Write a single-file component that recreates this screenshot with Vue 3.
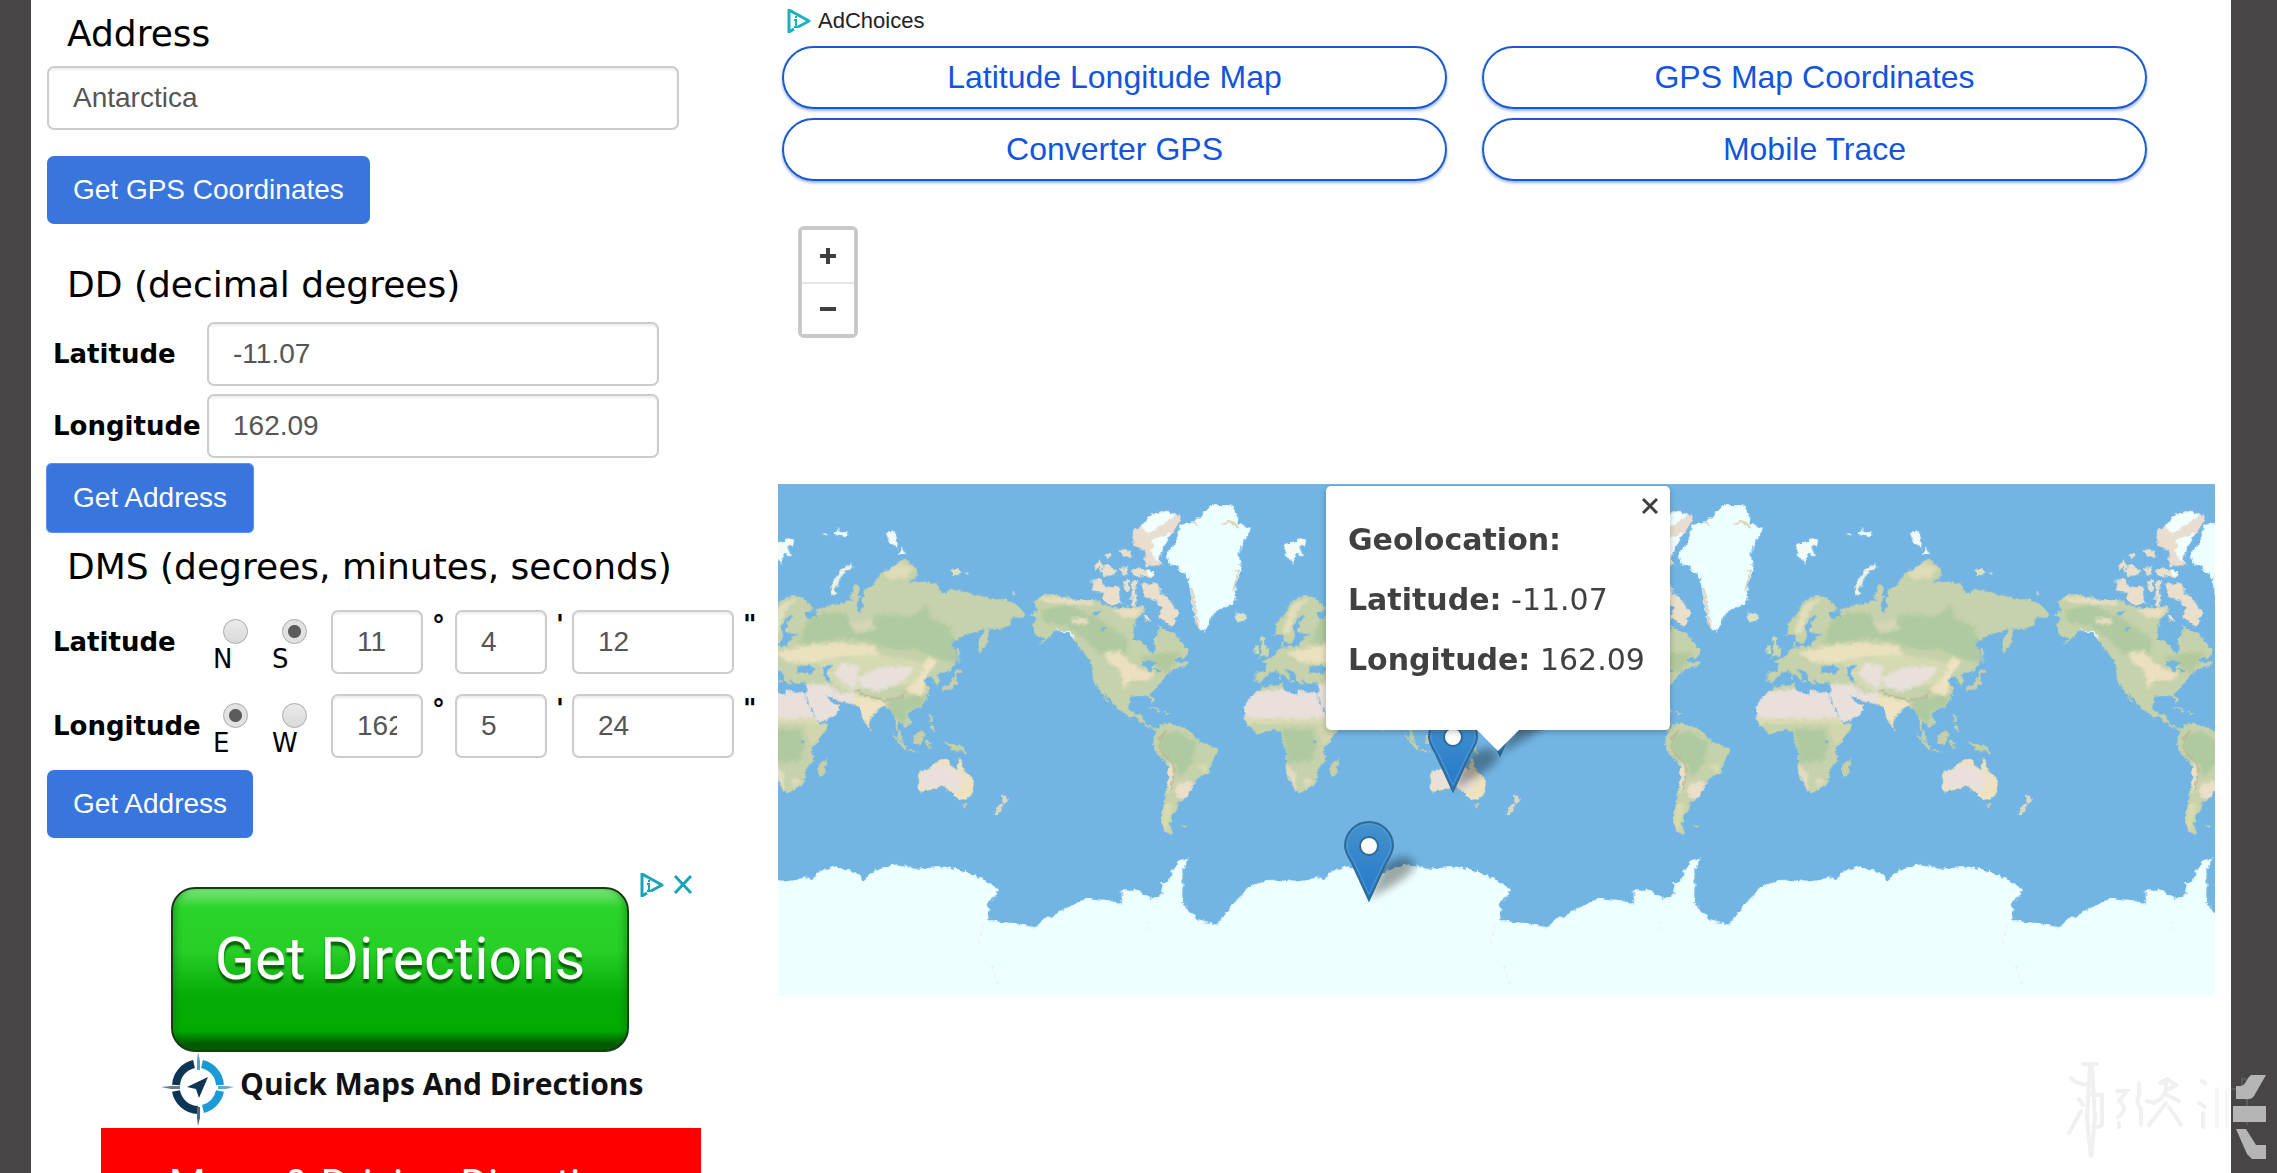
<script setup>
import { ref } from 'vue'

const address = ref('Antarctica')
const decimal = ref({ lat: '-11.07', lng: '162.09' })
const dms = ref([
  { key: 'lat', name: 'Latitude', options: ['N', 'S'], side: 'S', deg: '11', min: '4', sec: '12' },
  { key: 'lng', name: 'Longitude', options: ['E', 'W'], side: 'E', deg: '162', min: '5', sec: '24' }
])
const adLinks = ['Latitude Longitude Map', 'GPS Map Coordinates', 'Converter GPS', 'Mobile Trace']
const worldCopies = [-512, 0, 512, 1024, 1536]
const pins = [
  { x: 722, y: 271 },
  { x: 675, y: 307 },
  { x: 591, y: 416 }
]
</script>

<template>
  <div class="page">
    <main class="sheet">
      <section class="tools">
        <form class="block" @submit.prevent>
          <h2 class="title"><label for="address">Address</label></h2>
          <input id="address" v-model="address" class="field address" type="text">
          <button class="btn btn-search" type="submit">Get GPS Coordinates</button>
        </form>

        <form class="block" @submit.prevent>
          <h2 class="title title-dd">DD (decimal degrees)</h2>
          <div class="rows rows-dd">
            <div class="row">
              <label class="name" for="dd-lat">Latitude</label>
              <input id="dd-lat" v-model="decimal.lat" class="field decimal" type="text">
            </div>
            <div class="row">
              <label class="name" for="dd-lng">Longitude</label>
              <input id="dd-lng" v-model="decimal.lng" class="field decimal" type="text">
            </div>
          </div>
          <button class="btn btn-active" type="submit">Get Address</button>
        </form>

        <form class="block" @submit.prevent>
          <h2 class="title title-dms">DMS (degrees, minutes, seconds)</h2>
          <div class="rows rows-dms">
            <div v-for="r in dms" :key="r.key" class="row">
              <span class="name">{{ r.name }}</span>
              <label v-for="o in r.options" :key="o" class="side">
                <input v-model="r.side" type="radio" :name="r.key" :value="o">
                <span>{{ o }}</span>
              </label>
              <input v-model="r.deg" class="field small" type="text" :aria-label="r.name + ' degrees'">
              <span class="unit unit-deg">°</span>
              <input v-model="r.min" class="field small" type="text" :aria-label="r.name + ' minutes'">
              <span class="unit">'</span>
              <input v-model="r.sec" class="field seconds" type="text" :aria-label="r.name + ' seconds'">
              <span class="unit">"</span>
            </div>
          </div>
          <button class="btn btn-last" type="submit">Get Address</button>
        </form>

        <aside class="banner">
          <a class="directions" href="#">Get Directions</a>
          <div class="brand">
            <svg class="compass" width="74" height="76" viewBox="0 0 74 76" aria-hidden="true">
              <g fill="none" stroke-width="8">
                <path d="M41 12A23 23 0 0 1 59 33" stroke="#1c9ad6" />
                <path d="M59 39A23 23 0 0 1 42 57" stroke="#1c9ad6" />
                <path d="M33 12A23 23 0 0 0 15 33" stroke="#0e3556" />
                <path d="M15 39A23 23 0 0 0 37 58" stroke="#0e3556" />
              </g>
              <path d="M37 0L39 9V18H36V9z" fill="#5b9fc4" />
              <path d="M37 74L39 66V55H36V66z" fill="#4b6a82" />
              <path d="M0 35L10 34H19V37H10z" fill="#5f7f95" />
              <path d="M73 35L65 34H57V37H65z" fill="#5cabd6" />
              <path d="M47 25L26 35 35 37 38 46z" fill="#0e3556" />
            </svg>
            <span class="brand-name">Quick Maps And Directions</span>
          </div>
          <a class="red" href="#">Maps &amp; Driving Directions</a>
          <div class="ad-marks">
            <svg width="24" height="24" viewBox="0 0 24 24" aria-hidden="true">
              <path d="M7 20L2 23V1L22 12 11 18" fill="none" stroke="#1ba3b8" stroke-width="3" stroke-linejoin="round" />
              <path d="M9 7v2M7 11h2v7M7 18h4" fill="none" stroke="#1ba3b8" stroke-width="2" />
            </svg>
            <svg width="20" height="24" viewBox="0 0 20 24" aria-hidden="true">
              <path d="M2 3L18 20M18 3L2 20" stroke="#1ba3b8" stroke-width="3" />
            </svg>
          </div>
        </aside>
      </section>

      <section class="view">
        <div class="choices">
          <svg width="24" height="24" viewBox="0 0 24 24" aria-hidden="true">
            <path d="M7 20L2 23V1L22 12 11 18" fill="none" stroke="#1bb0c2" stroke-width="3" stroke-linejoin="round" />
            <path d="M9 7v2M7 11h2v7M7 18h4" fill="none" stroke="#1bb0c2" stroke-width="2" />
          </svg>
          <span>AdChoices</span>
        </div>
        <nav class="links">
          <a v-for="l in adLinks" :key="l" class="pill" href="#">{{ l }}</a>
        </nav>
        <div class="zoom">
          <button type="button" aria-label="Zoom in">
            <svg width="16" height="16" viewBox="0 0 16 16"><path d="M0 8H16M8 0V16" stroke="#404040" stroke-width="4" /></svg>
          </button>
          <button type="button" aria-label="Zoom out">
            <svg width="16" height="16" viewBox="0 0 16 16"><path d="M0 8H16" stroke="#404040" stroke-width="4" /></svg>
          </button>
        </div>

        <div class="map">
          <svg class="tiles" width="100%" height="512" aria-hidden="true">
            <defs>
              <filter id="coast" x="-5%" y="-5%" width="110%" height="110%" color-interpolation-filters="sRGB">
                <feTurbulence type="fractalNoise" baseFrequency="0.07" numOctaves="3" seed="4" result="n" />
                <feDisplacementMap in="SourceGraphic" in2="n" scale="16" xChannelSelector="R" yChannelSelector="G" />
              </filter>
              <filter id="soft" x="-10%" y="-10%" width="120%" height="120%" color-interpolation-filters="sRGB">
                <feGaussianBlur stdDeviation="4" />
              </filter>
              <clipPath id="eurasia-clip">
                <path d="M-60 618L-74 612-74 586-46 586-45 565-56 555-30 545-10 520 0 515-2 498 6 497 5 515 30 512 48 508 56 490 81 478 46 473 46 450 62 425 55 420 45 432 30 450 32 475 38 485 26 505 12 500 0 478-18 478-16 445 6 420 20 390 45 370 70 362 95 372 122 400 120 412 96 410 108 434 130 425 128 405 150 400 170 392 205 385 225 380 232 340 245 332 250 360 245 400 250 415 258 400 262 350 290 330 310 300 345 280 372 260 410 280 412 310 390 325 430 322 470 335 480 360 520 345 570 360 620 375 660 375 700 400 715 420 700 430 680 425 672 450 640 462 612 458 610 500 590 535 582 520 585 490 605 462 550 478 515 495 508 510 520 525 525 555 500 585 480 592 468 592 476 615 465 632 455 605 440 600 428 610 440 620 445 640 440 665 420 688 395 698 385 712 397 735 378 748 362 725 357 748 377 792 360 777 350 740 348 710 335 695 320 688 300 700 285 715 278 748 265 735 250 690 235 680 225 678 195 672 170 660 155 652 165 670 197 685 185 710 155 728 135 732 120 705 98 660 105 640 100 618 65 620 55 608 58 625 45 618 30 585 8 576 26 604 20 612-4 588-22 582-34 592-48 602z" />
              </clipPath>
              <clipPath id="africa-clip">
                <path d="M1375 632L1395 627 1435 622 1440 640 1470 652 1480 640 1532 648 1538 668 1548 695 1562 725 1572 738 1597 738 1592 755 1570 785 1553 805 1556 845 1537 865 1535 890 1520 915 1500 932 1470 937 1462 915 1448 880 1445 850 1447 825 1438 800 1432 765 1415 752 1395 760 1370 765 1345 752 1330 730 1327 700 1332 680 1345 660z" />
              </clipPath>
              <clipPath id="america-clip">
                <path d="M735 385L770 360 820 368 860 378 910 378 960 400 1010 400 1045 395 1050 410 1030 430 1018 460 1020 490 1050 505 1070 535 1080 520 1075 495 1090 455 1115 465 1135 475 1150 500 1172 530 1165 545 1130 550 1150 560 1180 555 1160 570 1125 580 1105 600 1085 630 1065 650 1075 670 1070 677 1058 655 1010 658 1003 690 1020 710 1040 705 1045 730 1065 745 1085 750 1105 735 1160 745 1190 770 1200 785 1255 810 1250 830 1235 850 1230 880 1200 890 1180 930 1165 955 1145 960 1140 985 1125 1000 1120 1030 1130 1057 1105 1050 1095 1020 1105 960 1115 900 1115 860 1085 825 1072 795 1082 755 1060 748 1030 725 1000 712 975 695 955 670 935 645 950 682 928 650 905 610 900 560 875 525 840 475 800 465 780 490 750 508 770 490 740 475 735 450 750 430 730 422 750 405z" />
              </clipPath>
              <g id="world" transform="translate(-8 -14) scale(.3571 .3444)">
                <g filter="url(#coast)">
                  <g clip-path="url(#eurasia-clip)">
                    <rect x="-120" y="240" width="900" height="600" fill="#c5d2ab" />
                    <g filter="url(#soft)">
                      <path d="M80 500L110 430 150 415 210 415 230 450 270 455 300 420 400 425 440 390 450 430 500 455 510 480 540 520 520 560 450 540 410 520 330 520 270 495 190 490 100 505z" fill="#b0ca9f" />
                      <path d="M10 530L100 510 190 500 290 510 310 540 200 540 140 560 60 560z" fill="#ebe1bf" />
                      <path d="M140 550L310 535 390 550 440 560 430 620 200 640 150 590z" fill="#d6dab3" />
                      <path d="M90 620L160 620 200 650 240 640 250 570 200 560 180 590 230 640 240 675 200 720 130 740 90 680z" fill="#e9e0dc" />
                      <path d="M245 605L280 585 330 570 400 572 390 600 350 625 300 645 260 635z" fill="#e9e0dc" />
                      <path d="M230 650L330 675 300 705 280 750 240 700zM440 545L470 550 440 600 430 660 380 640 420 600z" fill="#efe3c1" />
                      <path d="M325 670L440 650 420 690 380 700 380 740 340 710z" fill="#b0ca9f" />
                      <path d="M320 290L370 270 400 285 390 310 330 320z" fill="#dfdcb8" />
                      <path d="M0 470L30 390 80 372 40 410 20 480z" fill="#e2dfbc" />
                      <path d="M220 440L280 430 300 460 240 475z" fill="#d3d5b3" />
                    </g>
                    <path d="M240 640L270 655 320 668 370 660 375 645" fill="none" stroke="#bab494" stroke-width="4" />
                    <path d="M76 590L78 568 95 573 98 565 112 567 125 578 115 593 95 588zM148 575L165 562 175 572 160 585 170 610 162 618 152 600z" fill="#72b5e4" />
                  </g>
                  <g clip-path="url(#africa-clip)">
                    <rect x="1320" y="610" width="290" height="340" fill="#c5d2ab" />
                    <g filter="url(#soft)">
                      <path d="M1320 665L1380 640 1435 635 1560 640 1570 728 1320 724z" fill="#e9e0dc" />
                      <path d="M1320 720H1575V738H1320z" fill="#d9dab3" />
                      <path d="M1432 752H1520L1530 800 1515 845 1450 850z" fill="#b0ca9f" />
                      <path d="M1530 740L1600 738 1560 800 1545 790z" fill="#d2d6ad" />
                      <path d="M1445 855L1475 880 1470 937 1455 920zM1495 895H1515V915H1495z" fill="#e2dcc0" />
                    </g>
                    <circle cx="1525" cy="789" r="5" fill="#72b5e4" />
                  </g>
                  <g clip-path="url(#america-clip)">
                    <rect x="720" y="350" width="550" height="720" fill="#c5d2ab" />
                    <g filter="url(#soft)">
                      <path d="M760 410L830 390 920 430 1000 490 1000 530 920 530 870 480 830 455 770 440z" fill="#b0ca9f" />
                      <path d="M740 370L830 370 910 382 900 392 780 385zM840 430L890 430 890 450 850 445zM960 400L1050 400 1020 430 980 425z" fill="#e9dfc0" />
                      <path d="M935 530L980 525 1010 560 1040 580 1080 590 1060 610 1010 610 990 640 980 580 945 555z" fill="#ece0c0" />
                      <path d="M1030 545L1110 530 1150 530 1110 590 1070 560z" fill="#b3c99c" />
                      <path d="M1090 770L1140 760 1195 790 1180 850 1150 890 1130 850 1095 830z" fill="#b0ca9f" />
                      <path d="M1112 850L1130 860 1130 910 1115 940 1110 900zM1140 910L1175 900 1190 920 1160 960 1135 940z" fill="#ebdfca" />
                      <path d="M1100 960L1130 970 1110 1055 1095 1020zM1195 860L1225 850 1220 885z" fill="#d9dab0" />
                    </g>
                    <path d="M1110 755L1092 780 1092 815 1125 850 1135 880 1120 930" fill="none" stroke="#bcb391" stroke-width="4" />
                    <path d="M800 466L840 472 850 485" fill="none" stroke="#f1fbf8" stroke-width="7" />
                    <path d="M905 410L925 408 920 425 905 420zM930 458L942 456 940 466 930 466zM1040 555L1060 552 1085 560 1070 568 1065 590 1060 575 1045 567zM1070 575L1095 580 1085 590z" fill="#72b5e4" />
                  </g>
                  <g fill="#e9dfca">
                    <path d="M900 318L925 315 940 340 975 335 980 370 985 388 950 390 930 375 935 358 905 350z" />
                    <path d="M988 325L1002 318 1008 345 998 355zM1013 320L1030 320 1025 350 1025 400 1012 390z" />
                    <path d="M1040 330L1085 330 1095 355 1120 375 1130 395 1148 412 1135 430 1130 455 1100 440 1085 420 1100 400 1075 375 1050 370z" />
                    <path d="M905 280L925 262 933 282 912 290zM925 290L940 275 970 290 965 305 935 308zM980 285L1000 280 1002 303 985 300zM975 228L1005 238 1015 252 990 250zM940 245L955 240 955 255 940 256zM1012 290L1030 285 1075 295 1070 310 1020 308zM1045 420L1060 425 1068 440 1052 435z" />
                  </g>
                  <path d="M1035 165L1070 125 1110 118 1148 132 1140 170 1110 200 1090 260 1100 276 1050 280 1048 235 1018 215 1015 180z" fill="#e8ddcf" />
                  <path d="M1040 160L1070 128 1110 120 1138 130 1100 160 1060 185zM1072 200L1125 180 1105 215 1085 270 1070 250zM1055 293L1075 293 1073 308 1058 306z" fill="#f1fefe" />
                  <path d="M1148 160L1190 150 1210 125 1240 102 1290 102 1312 130 1310 155 1347 168 1330 200 1312 240 1320 290 1305 330 1303 380 1250 410 1230 440 1220 470 1205 465 1190 430 1180 370 1170 310 1145 285 1115 270 1110 240 1135 215z" fill="#edfffe" />
                  <path d="M1265 158L1290 150 1312 165M1185 150L1195 162M1180 340L1192 410 1200 460M1312 290L1298 350" fill="none" stroke="#dccfb3" stroke-width="5" />
                  <path d="M1438 215L1465 210 1485 198 1502 205 1498 218 1478 225 1495 245 1490 250 1475 240 1462 275 1452 255 1440 235zM325 183L345 178 358 210 355 228 335 212zM358 245L368 222 380 245zM145 190L162 182 160 192zM175 185L190 172 205 180 218 182 208 195 190 190z" fill="#f3fbf7" />
                  <path d="M230 275L205 292 185 320 175 350 182 362" fill="none" stroke="#eaf1e4" stroke-width="12" />
                  <path d="M507 290L530 286 536 302 512 306zM543 297L560 303 545 305zM675 355L687 357 680 362zM1300 420L1315 415 1335 420 1335 432 1312 442z" fill="#dfdfc5" />
                  <path d="M1375 485L1385 485 1383 505 1398 520 1395 538 1368 545 1380 530 1375 515zM1358 515L1368 508 1370 528 1356 535z" fill="#cfd7ad" />
                  <path d="M1428 598h5v10h-5zM1458 612L1470 610 1462 618z" fill="#d8d8b0" />
                  <g fill="#c7cfa6">
                    <path d="M524 575L540 585 525 593 523 620 505 635 482 642 480 632 505 620 515 605zM522 515L530 520 528 565z" />
                    <path d="M340 762L360 780 380 800 383 815 365 802zM398 775L425 755 433 765 425 795 405 795zM385 812L415 816 410 820 388 817zM437 785L455 790 445 795 452 808 440 805zM445 705L452 715 455 730 448 728zM455 740L465 750 460 760 450 752zM485 790L510 795 535 800 555 825 530 815 510 815 500 800zM278 745L286 755 280 757z" />
                    <path d="M135 855L150 845 158 838 160 855 148 888 135 890zM540 970L551 970 547 982 540 980z" />
                    <path d="M652 938L660 950 670 955 655 970 648 968zM645 970L652 975 640 998 627 1000 632 985z" fill="#dcd9bd" />
                    <path d="M1062 688L1095 697 1090 702 1065 692zM1100 702L1118 704 1108 710zM1152 1032h10v4h-10z" />
                  </g>
                  <path d="M415 880L445 868 460 848 490 838 505 842 505 858 522 868 530 835 542 870 565 890 572 920 555 955 530 958 510 935 485 920 455 925 425 938 415 925 418 905z" fill="#efe2c0" />
                  <path d="M417 882L450 868 475 856 525 872 540 900 530 935 485 918 450 922 425 925z" fill="#e9e0dc" filter="url(#soft)" />
                  <path d="M-30 1194L60 1195 95 1182 115 1190 140 1165 180 1152 240 1168 260 1190 300 1158 345 1145 410 1158 490 1152 545 1165 590 1185 638 1215 630 1240 610 1250 612 1310 680 1315 745 1328 770 1300 790 1300 820 1275 890 1243 950 1250 985 1262 985 1220 1030 1222 1065 1245 1100 1232 1095 1200 1115 1195 1140 1140 1172 1127 1155 1160 1155 1260 1200 1308 1250 1320 1290 1270 1340 1210 1390 1193 1480 1192V1560H-30z" fill="#edfffe" />
                  <path d="M598 1320L582 1385M622 1440L640 1500M1055 1305L1060 1335" fill="none" stroke="#e0efee" stroke-width="3" stroke-dasharray="12 10" />
                </g>
              </g>
              <linearGradient id="pin-fill" x1="0" y1="0" x2="0" y2="1">
                <stop offset="0" stop-color="#4592cc" />
                <stop offset="1" stop-color="#2478cc" />
              </linearGradient>
              <filter id="pin-blur" x="-40%" y="-40%" width="180%" height="180%"><feGaussianBlur stdDeviation="4" /></filter>
              <g id="pin">
                <path d="M0 0C12 -10 40 -20 46 -34 44 -46 28 -46 14 -34z" fill="#000" opacity=".34" filter="url(#pin-blur)" />
                <path d="M0 0L-17 -37C-22 -45 -24 -50 -24 -54A24 24 0 0 1 24 -54C24 -50 22 -45 17 -37z" fill="url(#pin-fill)" stroke="#2e6c97" stroke-width="2" />
                <path d="M0 -6L-15 -38C-20 -46 -22 -50 -22 -54A22 22 0 0 1 22 -54C22 -50 20 -46 15 -38z" fill="none" stroke="#5fa4d8" stroke-width="1" opacity=".7" />
                <circle cy="-54" r="9" fill="#fff" stroke="#2e6c97" stroke-width="2" />
              </g>
            </defs>
            <use v-for="x in worldCopies" :key="x" href="#world" :x="x" />
            <use v-for="p in pins" :key="p.x" href="#pin" :x="p.x" :y="p.y" />
          </svg>
          <div class="popup">
            <p><b>Geolocation:</b></p>
            <p><b>Latitude:</b> -11.07</p>
            <p><b>Longitude:</b> 162.09</p>
            <button class="close" type="button" aria-label="Close">
              <svg width="16" height="16" viewBox="0 0 16 16"><path d="M1 1L15 15M15 1L1 15" stroke="#404040" stroke-width="3" /></svg>
            </button>
            <svg class="tip" width="42" height="22" viewBox="0 0 42 22" aria-hidden="true"><path d="M0 0H42L21 21z" fill="#fff" /></svg>
          </div>
        </div>
      </section>
    </main>

    <svg class="stamp" width="210" height="110" viewBox="0 0 210 110" aria-hidden="true">
      <g fill="none" stroke="#f0f0f0" stroke-width="4" stroke-linecap="round">
        <path d="M12 19Q20 27 31 25M31 5L28 60 32 98 36 60 33 5zM24 5H38M32 36H43V64Q42 70 34 67M20 40L24 46M22 52L10 74" />
        <path d="M58 32H68L60 42Q70 50 59 58M60 64V68" />
        <path d="M80 24V36Q76 44 82 50V66M88 42L95 44 102 40 107 32V24H100L108 20 117 26 110 30M108 36L120 42M107 44L90 66M110 48L122 66" />
        <path d="M143 22L146 24M140 44L146 48M144 54V68" />
        <path d="M158 30V68M168 30V68" stroke="#f7f7f7" />
      </g>
      <path d="M172 30H183V20Q188 18 188 26V66" fill="none" stroke="#5c5a5a" stroke-width="2" />
      <g fill="#b5b5b5">
        <path d="M177 27H182Q186 26 189 19L192 16H207L195 37Q192 41 186 40H177z" />
        <path d="M174 47H207V63H174z" />
        <path d="M177 70H187L197 86H207V100H193L188 95z" />
      </g>
    </svg>
  </div>
</template>

<style>
body { margin: 0; }
</style>

<style scoped>
* { box-sizing: border-box; }
.page {
  position: relative;
  height: 100vh;
  overflow: hidden;
  padding: 0 46px 0 31px;
  background: #484546;
  font-family: Verdana, "DejaVu Sans", sans-serif;
  font-size: 26px;
  color: #000;
}
.sheet {
  display: flex;
  min-height: 100%;
  padding-right: 16px;
  background: #fff;
}
.tools { flex: none; width: 747px; padding: 12px 0 0 16px; }
.block { display: flex; flex-direction: column; align-items: flex-start; }
.title {
  margin: 0 0 10px;
  padding-left: 20px;
  font-size: 36px;
  font-weight: 400;
  line-height: 44px;
}
.title-dd { margin: 39px 0 15px; }
.title-dms { margin: 13px 0 21px; }
.field {
  height: 64px;
  padding: 0 24px;
  border: 2px solid #ccc;
  border-radius: 7px;
  background: #fff;
  box-shadow: inset 0 2px 2px rgba(0, 0, 0, .08);
  font: 28px "Liberation Sans", Arial, sans-serif;
  color: #555;
}
.address { width: 632px; }
.decimal { width: 452px; }
.small { width: 92px; }
.seconds { width: 162px; }
.btn {
  height: 68px;
  padding: 0 26px;
  border: 0;
  border-radius: 7px;
  background: #3875dd;
  font: 28px "Liberation Sans", Arial, sans-serif;
  color: #fff;
}
.btn-search { margin-top: 26px; }
.btn-active { margin-top: 6px; border-radius: 4px; outline: 1px solid #5a94ee; }
.btn-last { margin-top: 12px; }
.rows { display: flex; flex-direction: column; padding-left: 6px; }
.rows-dd { gap: 8px; }
.rows-dms { gap: 20px; }
.row { display: flex; align-items: center; }
.name { width: 154px; font-weight: 700; }
.rows-dms .name { width: 160px; }
.side {
  display: flex;
  flex-direction: column;
  align-self: flex-start;
  width: 59px;
  padding-top: 9px;
  line-height: 30px;
}
.side input {
  appearance: none;
  width: 25px;
  height: 25px;
  margin: 0 0 0 10px;
  border: 1px solid #a9a9a9;
  border-radius: 50%;
  background: linear-gradient(#ebebeb, #d9d9d9);
}
.side input:checked { background: radial-gradient(circle, #5c5c5c 6px, #e2e2e2 7px); }
.unit { align-self: flex-start; width: 16px; margin-left: 9px; font-weight: 700; line-height: 30px; }
.unit-deg { width: 23px; }

.banner { position: relative; width: 600px; margin: 49px 0 0 54px; }
.directions {
  display: block;
  width: 458px;
  height: 165px;
  margin-left: 70px;
  padding-top: 38px;
  border: 2px solid #173a17;
  border-radius: 24px;
  background: linear-gradient(#7be57b, #2ad42a 12%, #27cf27 38%, #07ad07 66%, #02ab02 88%, #025c02 96%);
  box-shadow: inset 6px 0 6px -3px rgba(0, 110, 0, .4), inset -6px 0 6px -3px rgba(0, 110, 0, .4);
  font: 59px/64px Roboto, sans-serif;
  text-align: center;
  text-decoration: none;
  text-shadow: 0 4px 2px rgba(0, 70, 0, .8);
  color: #fff;
}
.brand {
  display: flex;
  align-items: center;
  gap: 5px;
  height: 76px;
  padding-left: 60px;
  font: 700 30px/40px "Open Sans", sans-serif;
  color: #111;
}
.brand-name { padding-bottom: 12px; }
.red {
  display: block;
  height: 120px;
  padding: 33px 0 0 68px;
  background: #f00;
  font: 42px/48px Roboto, sans-serif;
  text-decoration: none;
  color: #fff;
}
.ad-marks { position: absolute; top: -14px; right: 8px; display: flex; gap: 9px; }

.view { flex: 1; min-width: 0; }
.choices {
  display: flex;
  align-items: center;
  gap: 7px;
  height: 46px;
  padding: 0 0 4px 9px;
  font: 22px "Liberation Sans", Arial, sans-serif;
  color: #222;
}
.links {
  display: grid;
  grid-template-columns: 1fr 1fr;
  gap: 9px 35px;
  padding: 0 68px 0 4px;
}
.pill {
  height: 63px;
  border: 2px solid #1a5bcb;
  border-radius: 32px;
  box-shadow: 0 2px 3px rgba(20, 80, 200, .45);
  font: 32px/58px "Liberation Sans", Arial, sans-serif;
  text-align: center;
  text-decoration: none;
  color: #1155dd;
}
.zoom {
  display: flex;
  flex-direction: column;
  width: 60px;
  margin: 45px 0 146px 20px;
  border: 4px solid #c9c9c9;
  border-radius: 6px;
}
.zoom button {
  display: grid;
  place-items: center;
  height: 52px;
  padding: 0;
  border: 0;
  background: #fff;
}
.zoom button + button { border-top: 2px solid #e6e6e6; }
.map { position: relative; background: #72b5e4; }
.tiles { display: block; }
.popup {
  position: absolute;
  top: 2px;
  left: 548px;
  width: 344px;
  padding: 24px 0 40px 22px;
  border-radius: 5px;
  background: #fff;
  box-shadow: 0 2px 6px rgba(0, 0, 0, .25);
  font-size: 30px;
  line-height: 60px;
  white-space: nowrap;
  color: #404040;
}
.popup p { margin: 0; }
.close {
  position: absolute;
  top: 12px;
  right: 12px;
  display: flex;
  padding: 0;
  border: 0;
  background: none;
}
.tip { position: absolute; top: 100%; left: 151px; }
.stamp { position: absolute; right: 8px; bottom: 4px; }
</style>
